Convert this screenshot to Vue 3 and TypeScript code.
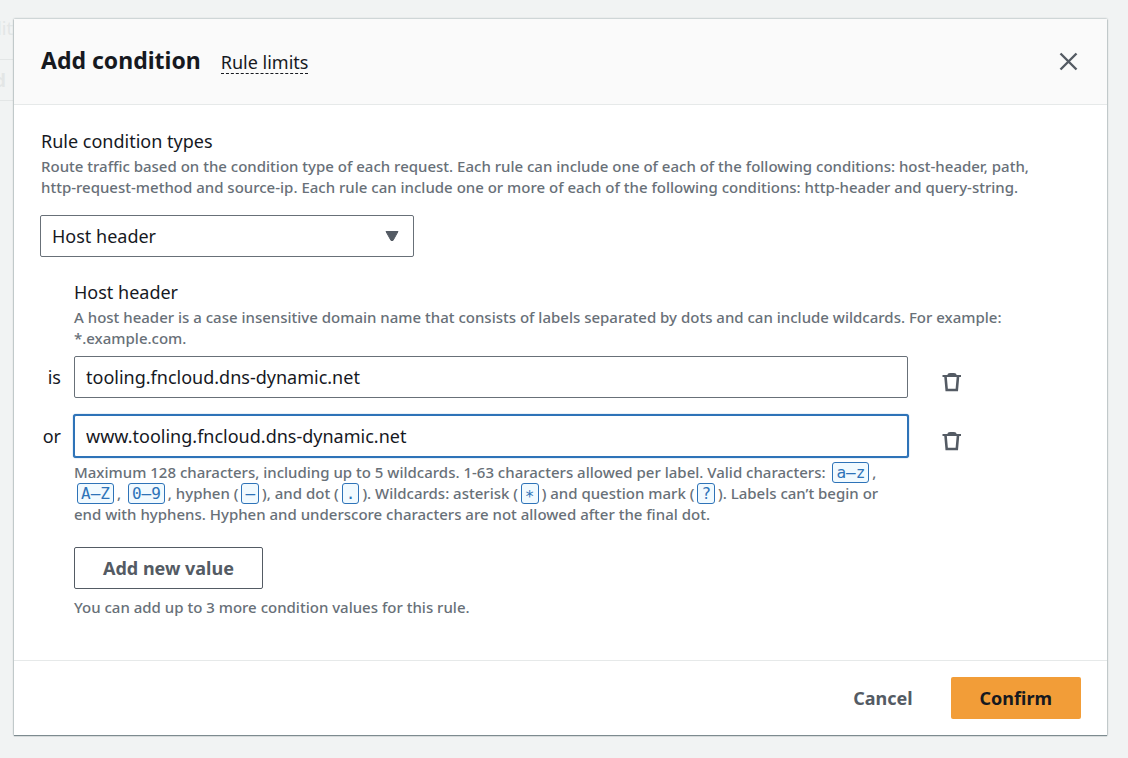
<script setup lang="ts">
import { ref } from 'vue'

interface ConditionValue {
  id: number
  joiner: string
  value: string
}

const conditionType = ref('host-header')
const activeId = ref(2)
const values = ref<ConditionValue[]>([
  { id: 1, joiner: 'is', value: 'tooling.fncloud.dns-dynamic.net' },
  { id: 2, joiner: 'or', value: 'www.tooling.fncloud.dns-dynamic.net' },
])

function removeValue(id: number) {
  values.value = values.value.filter((entry) => entry.id !== id)
}

function addValue() {
  const id = Math.max(0, ...values.value.map((entry) => entry.id)) + 1
  values.value.push({ id, joiner: values.value.length ? 'or' : 'is', value: '' })
  activeId.value = id
}
</script>

<template>
  <div class="page">
    <div class="backdrop" aria-hidden="true">
      <div class="backdrop-title">dit</div>
      <div class="backdrop-row">d</div>
    </div>

    <section class="modal" role="dialog" aria-labelledby="modal-title">
      <header class="modal-header">
        <div class="heading">
          <h1 id="modal-title">Add condition</h1>
          <a class="limits" href="#limits">Rule limits</a>
        </div>
        <button class="icon-button" type="button" aria-label="Close">
          <svg width="19" height="19" viewBox="0 0 19 19" aria-hidden="true">
            <path class="cross" d="M1.500 1.500l16 16M17.500 1.500l-16 16" />
          </svg>
        </button>
      </header>

      <div class="modal-body">
        <label class="label" for="condition-type">Rule condition types</label>
        <p class="hint">
          Route traffic based on the condition type of each request. Each rule can include one of each of the following conditions: host-header, path, <span class="nowrap">http-request-method</span> and source-ip. Each rule can include one or more of each of the following conditions: http-header and query-string.
        </p>
        <div class="select-wrap">
          <select id="condition-type" v-model="conditionType">
            <option value="host-header">Host header</option>
            <option value="path">Path</option>
            <option value="source-ip">Source IP</option>
          </select>
          <svg class="caret" width="14" height="12" viewBox="0 0 14 12" aria-hidden="true">
            <path d="M1 1.500h12l-5 9h-2z" />
          </svg>
        </div>

        <div class="group">
          <h2 class="label">Host header</h2>
          <p class="hint">
            A host header is a case insensitive domain name that consists of labels separated by dots and can include wildcards. For example: *.example.com.
          </p>
          <div class="values">
            <div v-for="entry in values" :key="entry.id" class="value-row">
              <label class="joiner" :for="`value-${entry.id}`">{{ entry.joiner }}</label>
              <input
                :id="`value-${entry.id}`"
                v-model="entry.value"
                :class="{ active: entry.id === activeId }"
                type="text"
                spellcheck="false"
                @focus="activeId = entry.id"
              />
              <button class="icon-button trash" type="button" aria-label="Remove value" @click="removeValue(entry.id)">
                <svg width="20" height="20" viewBox="0 0 20 20" aria-hidden="true">
                  <path d="M0.500 4h18.500" />
                  <path d="M6 3q1-1 2.500-1h3q1.500 0 2.500 1" />
                  <path class="can" d="M3.500 4.500l1.200 13.500h10.100l1.200-13.500" />
                </svg>
              </button>
            </div>
          </div>
          <p class="hint constraint">
            Maximum 128 characters, including up to 5 wildcards. 1-63 characters allowed per label. Valid characters: <code>a–z</code>, <code>A–Z</code>, <code>0–9</code>, hyphen (<code>–</code>), and dot (<code>.</code>). Wildcards: asterisk (<code>∗</code>) and question mark (<code>?</code>). Labels can’t begin or end with hyphens. Hyphen and underscore characters are not allowed after the final dot.
          </p>
          <button class="button outline" type="button" @click="addValue">Add new value</button>
          <p class="hint">You can add up to 3 more condition values for this rule.</p>
        </div>
      </div>

      <footer class="modal-footer">
        <button class="button" type="button">Cancel</button>
        <button class="button primary" type="button">Confirm</button>
      </footer>
    </section>
  </div>
</template>

<style>
body {
  background: #f1f3f3;
}
</style>

<style scoped>
.page,
.page * {
  box-sizing: border-box;
}

.page {
  position: relative;
  padding: 19px 21px 22px 14px;
  font-family: "Noto Sans", "Open Sans", sans-serif;
  font-size: 18px;
  line-height: 24px;
  color: #16191f;
}

h1,
h2,
p {
  margin: 0;
}

button,
input,
select {
  font: inherit;
  color: inherit;
}

button {
  cursor: pointer;
}

.backdrop {
  position: absolute;
  top: 0;
  left: 0;
  width: 13px;
  overflow: hidden;
  color: #e3e6e6;
}

.backdrop-title {
  display: flex;
  justify-content: flex-end;
  height: 60px;
  padding-top: 16px;
  border-bottom: 1px solid #e3e6e6;
}

.backdrop-row {
  display: flex;
  justify-content: flex-end;
  height: 41px;
  padding: 8px 7px 8px 0;
  border-bottom: 1px solid #e3e6e6;
  font-weight: 700;
}

.modal {
  position: relative;
  background: #fff;
  box-shadow: 0 1px 1px 0 #7d8b8f, 0 0 2px 0 #8a989b;
}

.modal-header {
  display: flex;
  align-items: center;
  justify-content: space-between;
  height: 86px;
  padding: 0 29px 0 27px;
  background: #fafafa;
  border-bottom: 1px solid #e6e9e9;
}

.heading {
  display: flex;
  align-items: baseline;
  gap: 20px;
  padding-bottom: 4px;
}

h1 {
  font-size: 23px;
  line-height: 30px;
  font-weight: 700;
}

.limits {
  color: inherit;
  text-decoration: none;
  line-height: 22px;
  border-bottom: 1px dashed #16191f;
}

.icon-button {
  display: flex;
  padding: 0;
  border: 0;
  background: none;
}

.icon-button svg {
  fill: none;
  stroke: #545b64;
  stroke-width: 2;
}

.icon-button .cross {
  stroke-width: 2.4;
}

.modal-body {
  padding: 23px 27px 42px;
}

.label {
  display: block;
  margin-bottom: 2px;
  font-size: 18px;
  line-height: 26px;
  font-weight: 400;
}

.hint {
  font-size: 15px;
  font-weight: 500;
  line-height: 21px;
  color: #687078;
}

.nowrap {
  white-space: nowrap;
}

.select-wrap {
  position: relative;
  width: 374px;
  margin: 17px 0 22px -1px;
}

select {
  display: block;
  width: 100%;
  height: 42px;
  padding: 0 40px 1px 11px;
  border: 1px solid #687078;
  border-radius: 2px;
  background: #fff;
  appearance: none;
}

.caret {
  position: absolute;
  top: 15px;
  right: 15px;
  fill: #545b64;
  stroke: #545b64;
  stroke-linejoin: round;
  pointer-events: none;
}

.group {
  padding-left: 33px;
}

.values {
  display: flex;
  flex-direction: column;
  gap: 17px;
  margin: 7px 0 5px -33px;
}

.value-row {
  display: flex;
  align-items: center;
}

.joiner {
  width: 33px;
  padding-right: 13px;
  text-align: right;
}

input {
  flex: 1;
  min-width: 0;
  height: 42px;
  padding: 0 11px;
  border: 1px solid #687078;
  border-radius: 2px;
  background: #fff;
  outline: none;
}

input.active {
  border-color: #2e73b8;
  box-shadow: 0 0 0 1px #2e73b8, 0 0 1px 1px #2e73b8;
}

.trash {
  margin: 10px 118px 0 34px;
}

.trash .can {
  stroke-width: 2.6;
}

.constraint {
  max-width: 834px;
}

code {
  margin: 0 3px;
  padding: 0 3px;
  border: 1px solid #2e73b8;
  border-radius: 3px;
  background: #f1faff;
  color: #2e73b8;
  font-family: "DejaVu Sans Mono", monospace;
  font-size: 16px;
  font-weight: 400;
  line-height: 18px;
  white-space: nowrap;
}

.button {
  height: 42px;
  padding: 0 28px;
  border: 1px solid transparent;
  border-radius: 2px;
  background: none;
  font-weight: 700;
  color: #545b64;
}

.outline {
  display: block;
  margin: 22px 0 8px;
  border-color: #545b64;
}

.modal-footer {
  display: flex;
  justify-content: flex-end;
  gap: 9px;
  padding: 16px 26px;
  border-top: 1px solid #e6e9e9;
}

.primary {
  background: #f29d38;
  color: #16191f;
}
</style>
